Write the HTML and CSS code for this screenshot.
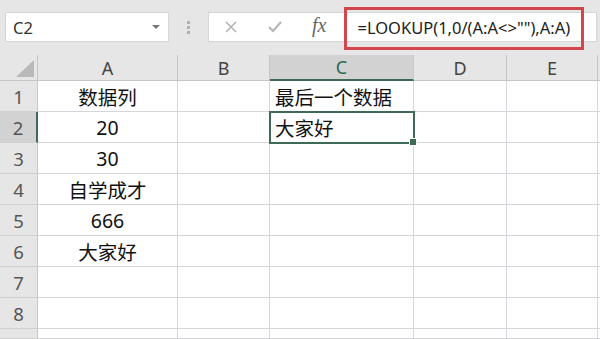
FILE: index.html
```html
<!DOCTYPE html>
<html lang="zh-CN">
<head>
  <meta charset="UTF-8">
  <title>LOOKUP</title>
  <link rel="stylesheet" href="styles.css">
</head>
<body>
  <div class="bar">
    <div class="namebox">
      <span>C2</span>
      <span class="arrow"></span>
    </div>
    <div class="grip"><i></i><i></i><i></i></div>
    <div class="formula">
      <svg class="icon" width="14" height="14" viewBox="0 0 14 14">
        <path d="M2 2 L12 12 M12 2 L2 12" stroke="#b4b4b4" stroke-width="1.6" fill="none"/>
      </svg>
      <svg class="icon" width="16" height="14" viewBox="0 0 16 14">
        <path d="M2 7 L6 11 L14 2" stroke="#b4b4b4" stroke-width="2" fill="none"/>
      </svg>
      <span class="fx">fx</span>
      <span class="text">=LOOKUP(1,0/(A:A&lt;&gt;""),A:A)</span>
    </div>
    <div class="mark"></div>
  </div>

  <div class="sheet">
    <div class="hd corner"><span class="tri"></span></div>
    <div class="hd">A</div>
    <div class="hd">B</div>
    <div class="hd sel-col">C</div>
    <div class="hd">D</div>
    <div class="hd">E</div>
    <div class="hd last"></div>

    <div class="rh">1</div><div class="c mid">数据列</div><div class="c"></div><div class="c">最后一个数据</div><div class="c"></div><div class="c"></div><div class="c last"></div>
    <div class="rh sel-row">2</div><div class="c mid">20</div><div class="c"></div><div class="c active">大家好<span class="handle"></span></div><div class="c"></div><div class="c"></div><div class="c last"></div>
    <div class="rh">3</div><div class="c mid">30</div><div class="c"></div><div class="c"></div><div class="c"></div><div class="c"></div><div class="c last"></div>
    <div class="rh">4</div><div class="c mid">自学成才</div><div class="c"></div><div class="c"></div><div class="c"></div><div class="c"></div><div class="c last"></div>
    <div class="rh">5</div><div class="c mid">666</div><div class="c"></div><div class="c"></div><div class="c"></div><div class="c"></div><div class="c last"></div>
    <div class="rh">6</div><div class="c mid">大家好</div><div class="c"></div><div class="c"></div><div class="c"></div><div class="c"></div><div class="c last"></div>
    <div class="rh">7</div><div class="c"></div><div class="c"></div><div class="c"></div><div class="c"></div><div class="c"></div><div class="c last"></div>
    <div class="rh">8</div><div class="c"></div><div class="c"></div><div class="c"></div><div class="c"></div><div class="c"></div><div class="c last"></div>
    <div class="rh"></div><div class="c"></div><div class="c"></div><div class="c"></div><div class="c"></div><div class="c"></div><div class="c last"></div>
  </div>
</body>
</html>
```

FILE: styles.css
```css
body {
  margin: 0;
  width: 600px;
  height: 339px;
  overflow: hidden;
  background: #e6e6e6;
  font-family: "Noto Sans", "Noto Sans CJK SC", sans-serif;
}

.bar {
  position: relative;
  height: 55px;
  display: flex;
  align-items: flex-start;
  padding-top: 12px;
  box-sizing: border-box;
}

.namebox {
  margin-left: 5px;
  width: 164px;
  height: 30px;
  box-sizing: border-box;
  background: #fff;
  border: 1px solid #d6d6d6;
  display: flex;
  align-items: center;
  justify-content: space-between;
  padding: 0 8px 0 7px;
  font-size: 16.5px;
  color: #333;
}

.arrow {
  width: 0;
  height: 0;
  border-left: 4px solid transparent;
  border-right: 4px solid transparent;
  border-top: 4px solid #777;
}

.grip {
  width: 39px;
  height: 30px;
  display: flex;
  flex-direction: column;
  align-items: center;
  justify-content: center;
  gap: 2px;
}

.grip i {
  width: 3px;
  height: 3px;
  background: #b0b0b0;
}

.formula {
  flex: 1;
  height: 30px;
  margin-right: 3px;
  box-sizing: border-box;
  background: #fff;
  border: 1px solid #d6d6d6;
  display: flex;
  align-items: center;
  padding-left: 15px;
}

.icon {
  margin-right: 29px;
}

.formula .icon + .icon {
  margin-right: 29px;
}

.fx {
  font-family: "Liberation Serif", serif;
  font-style: italic;
  font-size: 20px;
  color: #666;
  margin-top: -3px;
}

.text {
  margin-left: 31px;
  font-size: 16.5px;
  color: #222;
}

.mark {
  position: absolute;
  left: 344px;
  top: 7px;
  width: 240px;
  height: 43px;
  box-sizing: border-box;
  border: 3px solid #d2474e;
}

.sheet {
  display: grid;
  grid-template-columns: 38px 140px 92px 144px 93px 91px 2px;
  grid-template-rows: 26px repeat(8, 31px) 10px;
  background: #fff;
}

.hd {
  background: #e6e6e6;
  border-right: 1px solid #c6c6c6;
  border-bottom: 1px solid #c6c6c6;
  font-size: 18px;
  color: #444;
  display: flex;
  align-items: center;
  justify-content: center;
}

.corner {
  position: relative;
}

.tri {
  position: absolute;
  right: 3px;
  bottom: 3px;
  width: 0;
  height: 0;
  border-left: 18px solid transparent;
  border-bottom: 17px solid #b9b9b9;
}

.sel-col {
  background: #d2d2d2;
  border-bottom: 2px solid #3d6b55;
  color: #2e6a4a;
}

.rh {
  background: #e6e6e6;
  border-right: 1px solid #c6c6c6;
  border-bottom: 1px solid #d0d0d0;
  font-size: 18.5px;
  color: #555;
  display: flex;
  align-items: center;
  justify-content: center;
}

.sel-row {
  background: #d2d2d2;
  border-right: 2px solid #3d6b55;
}

.c {
  border-right: 1px solid #d6d5db;
  border-bottom: 1px solid #d6d5db;
  font-size: 19.5px;
  color: #111;
  display: flex;
  align-items: center;
  padding-left: 5px;
  white-space: nowrap;
}

.c.mid {
  justify-content: center;
  padding-left: 0;
}

.last {
  border-right: none;
}

.active {
  position: relative;
  outline: 2px solid #3d6b55;
  outline-offset: -1px;
}

.handle {
  position: absolute;
  right: -4px;
  bottom: -4px;
  width: 6px;
  height: 6px;
  background: #3d6b55;
  border: 1px solid #fff;
}
```
